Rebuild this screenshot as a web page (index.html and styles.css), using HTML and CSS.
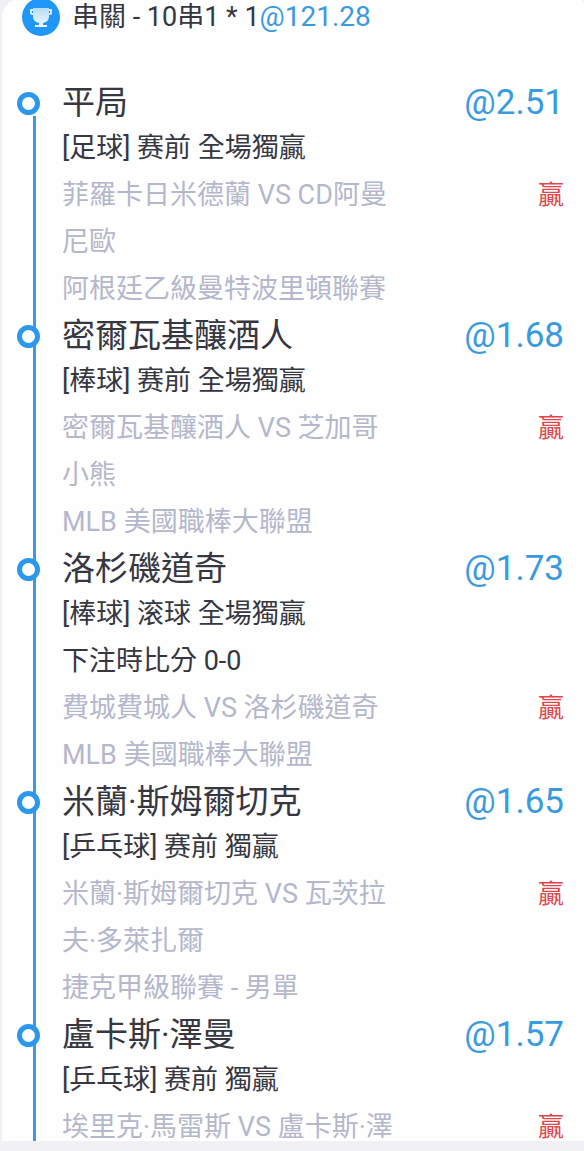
FILE: index.html
```html
<!DOCTYPE html>
<html lang="zh-Hant">
<head>
    <meta charset="UTF-8">
    <meta name="viewport" content="width=device-width, initial-scale=1.0">
    <title>串關</title>
    <link rel="stylesheet" href="styles.css">
</head>
<body>
    <main class="slip">
        <header class="slip-header">
            <svg class="slip-icon" viewBox="0 0 38 38" aria-hidden="true">
                <defs>
                    <linearGradient id="cup" x1="0" y1="0" x2="0" y2="1">
                        <stop offset="0" stop-color="#b5dcfb"/>
                        <stop offset="1" stop-color="#f2faff"/>
                    </linearGradient>
                </defs>
                <circle cx="19" cy="19" r="19" fill="#1f97f8"/>
                <path d="M11 12H9v3q0 1 2 1M27 12h2v3q0 1-2 1" fill="none" stroke="#d2eafd" stroke-width="2"/>
                <path d="M11 10h16v8c0 4-2 6-6 7v2h4v2H13v-2h4v-2c-4-1-6-3-6-7z" fill="url(#cup)"/>
            </svg>
            <h1 class="slip-title">串關 - 10串1 * 1<span class="slip-odds">@121.28</span></h1>
        </header>

        <ul class="legs">
            <li class="leg">
                <div class="rail"><span class="dot"></span></div>
                <div class="leg-body">
                    <div class="row row-pick">
                        <h2 class="pick">平局</h2>
                        <span class="odds">@2.51</span>
                    </div>
                    <p class="market">[足球] 赛前 全場獨贏</p>
                    <div class="row">
                        <p class="match">菲羅卡日米德蘭 VS CD阿曼尼歐</p>
                        <span class="result">贏</span>
                    </div>
                    <p class="league">阿根廷乙級曼特波里頓聯賽</p>
                </div>
            </li>
            <li class="leg">
                <div class="rail"><span class="dot"></span></div>
                <div class="leg-body">
                    <div class="row row-pick">
                        <h2 class="pick">密爾瓦基釀酒人</h2>
                        <span class="odds">@1.68</span>
                    </div>
                    <p class="market">[棒球] 赛前 全場獨贏</p>
                    <div class="row">
                        <p class="match">密爾瓦基釀酒人 VS 芝加哥小熊</p>
                        <span class="result">贏</span>
                    </div>
                    <p class="league">MLB 美國職棒大聯盟</p>
                </div>
            </li>
            <li class="leg">
                <div class="rail"><span class="dot"></span></div>
                <div class="leg-body">
                    <div class="row row-pick">
                        <h2 class="pick">洛杉磯道奇</h2>
                        <span class="odds">@1.73</span>
                    </div>
                    <p class="market">[棒球] 滚球 全場獨贏</p>
                    <p class="market">下注時比分 0-0</p>
                    <div class="row">
                        <p class="match">費城費城人 VS 洛杉磯道奇</p>
                        <span class="result">贏</span>
                    </div>
                    <p class="league">MLB 美國職棒大聯盟</p>
                </div>
            </li>
            <li class="leg">
                <div class="rail"><span class="dot"></span></div>
                <div class="leg-body">
                    <div class="row row-pick">
                        <h2 class="pick">米蘭·斯姆爾切克</h2>
                        <span class="odds">@1.65</span>
                    </div>
                    <p class="market">[乒乓球] 赛前 獨贏</p>
                    <div class="row">
                        <p class="match">米蘭·斯姆爾切克 VS 瓦茨拉夫·多萊扎爾</p>
                        <span class="result">贏</span>
                    </div>
                    <p class="league">捷克甲級聯賽 - 男單</p>
                </div>
            </li>
            <li class="leg">
                <div class="rail"><span class="dot"></span></div>
                <div class="leg-body">
                    <div class="row row-pick">
                        <h2 class="pick">盧卡斯·澤曼</h2>
                        <span class="odds">@1.57</span>
                    </div>
                    <p class="market">[乒乓球] 赛前 獨贏</p>
                    <div class="row">
                        <p class="match">埃里克·馬雷斯 VS 盧卡斯·澤</p>
                        <span class="result">贏</span>
                    </div>
                </div>
            </li>
        </ul>
    </main>
</body>
</html>
```

FILE: styles.css
```css
* {
    box-sizing: border-box;
}
body {
    margin: 0;
    padding: 0 0 10px 2px;
    height: 100vh;
    background-color: #f1f1f5;
    color: #363741;
    font-family: Roboto, "Noto Sans CJK TC", sans-serif;
    font-size: 27px;
    line-height: 47px;
}
h1,
h2,
p,
ul {
    margin: 0;
    padding: 0;
    font-weight: 400;
}
.slip {
    height: 100%;
    overflow: hidden;
    background-color: #fefefe;
    border-radius: 16px 4px 0 0;
}
.slip-header {
    display: flex;
    align-items: center;
    gap: 12px;
    height: 34px;
    margin-bottom: 46px;
    padding-left: 20px;
}
.slip-icon {
    flex: none;
    width: 38px;
    height: 38px;
}
.slip-title {
    font-size: 27px;
}
.slip-odds,
.odds {
    color: #3a9ae0;
}
.slip-odds {
    font-size: 28px;
}
.legs {
    list-style: none;
}
.leg {
    display: flex;
}
/* vertical line that joins the dots */
.rail {
    flex: none;
    width: 60px;
    padding: 12px 0 0 15px;
    background: linear-gradient(#3b9cd9, #3b9cd9) 31px 0 / 3px 100% no-repeat;
}
.leg:first-child .rail {
    background-position: 31px 36px;
}
.dot {
    display: block;
    width: 23px;
    height: 23px;
    border: 5px solid #2b98ee;
    border-radius: 50%;
    background-color: #fefefe;
}
.leg-body {
    flex: 1;
    padding-right: 20px;
}
.row {
    display: grid;
    grid-template-columns: 1fr 164px;
}
.row-pick {
    line-height: 45px;
}
.pick {
    font-size: 33px;
}
.odds {
    font-size: 35px;
    text-align: right;
}
.match,
.league {
    color: #b5b7cc;
}
.result {
    color: #e0454c;
    font-size: 26px;
    text-align: right;
}
```
